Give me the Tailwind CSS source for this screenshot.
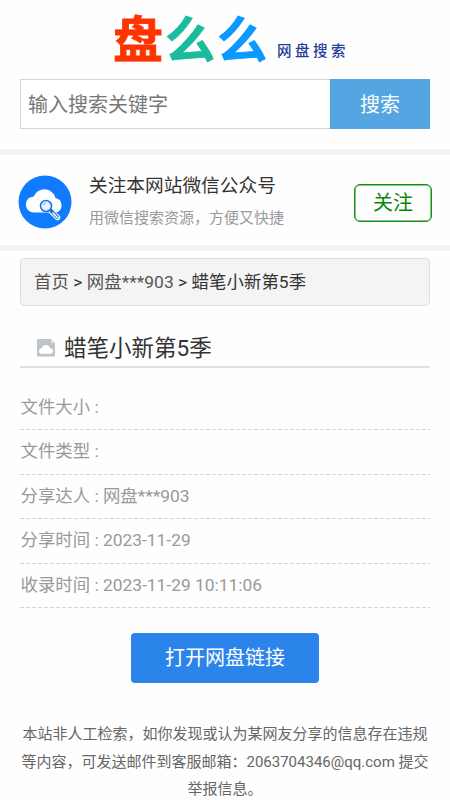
<!DOCTYPE html>
<html lang="zh-CN">
<head>
<meta charset="utf-8">
<title>盘么么</title>
<script src="https://cdn.jsdelivr.net/npm/@tailwindcss/browser@4"></script>
</head>
<body class="w-[450px] h-[800px] overflow-hidden bg-[#fefefe] font-[Roboto,'Noto_Sans_CJK_SC',sans-serif] text-[#444]">
<header class="h-[79px] pl-[113px] pt-[11px] flex whitespace-nowrap">
  <div class="flex text-[50px] leading-[60px] font-bold">
    <span class="w-[52px] text-[#ff3300] [-webkit-text-stroke:0.800px_#ff3300]">盘</span><span class="w-[52px] text-[#1abc9c] [-webkit-text-stroke:0.800px_#1abc9c]">么</span><span class="w-[58px] text-[#0c99ff] [-webkit-text-stroke:0.800px_#0c99ff]">么</span>
  </div>
  <div class="pt-[29px] pl-[2px] text-[14.500px] leading-[24px] font-medium tracking-[3.500px] text-[#1f4097]">网盘搜索</div>
</header>
<form class="mx-5 h-[50px] flex">
  <div class="w-[310px] border border-r-0 border-[#d5d5d5] bg-white pl-[7px] text-[20px] leading-[50px] text-[#777]">输入搜索关键字</div>
  <div class="w-[100px] bg-[#54a5e2] text-white text-center text-[20px] leading-[52px]">搜索</div>
</form>
<section class="mt-5 h-[102px] border-y-[6px] border-[#f4f4f4] flex items-center pl-[18px] pr-[18px]">
  <svg class="w-[54px] h-[54px] shrink-0 mt-[4px]" viewBox="0 0 54 54">
    <circle cx="27" cy="27" r="26.500" fill="#117bff"/>
    <path d="M16 37.500a8 8 0 0 1-.3-16.100 11.500 11.500 0 0 1 21.800 1.500 7.500 7.500 0 0 1 .5 14.600z" fill="#fff"/>
    <path d="M33 36l6.500 6.500" stroke="#fff" stroke-width="5.400" stroke-linecap="round"/>
    <path d="M32 34.500l7 7.500" stroke="#1675d5" stroke-width="3.400" stroke-linecap="round"/>
    <path d="M35 38l4 4.200" stroke="#fff" stroke-width="1.600" stroke-linecap="round"/>
    <circle cx="28" cy="31" r="5.500" fill="#e4f3ff" stroke="#1675d5" stroke-width="1.500"/>
    <path d="M25.500 30a3 3 0 0 1 2.500-2" fill="none" stroke="#67aef4" stroke-width="1"/>
  </svg>
  <div class="ml-[17px] mt-[2px] flex-1 whitespace-nowrap">
    <div class="text-[18.700px] leading-[30px] text-[#333]">关注本网站微信公众号</div>
    <div class="mt-[3px] text-[15px] leading-[28px] text-[#999]">用微信搜索资源，方便又快捷</div>
  </div>
  <div class="w-[78px] h-[38px] mt-[5px] rounded-[6px] border border-[#149014] shadow-[inset_0_0_0_0.500px_#149014] text-center text-[20px] leading-[36px] text-[#0b860b]">关注</div>
</section>
<main class="px-5">
  <nav class="mt-[7px] h-[48px] rounded-[4px] border border-[#dedede] bg-[#f4f4f4] pl-[13px] text-[17.400px] leading-[46px] whitespace-nowrap text-[#555]"><span class="tracking-[0.050px]">首页 <span class="text-[#333]">&gt;</span> 网盘***903 <span class="text-[#333]">&gt; 蜡笔小新第5季</span></span></nav>
  <h1 class="mt-[24px] h-[38px] border-b-2 border-[#e0e0e0] flex items-center pl-4 text-[22.500px] leading-[36px] text-[#333]">
    <svg class="w-[20px] h-[18px] mr-2 shrink-0" viewBox="0 0 20 18">
      <path d="M1 0h14l4 4v13.500H1z" fill="#bdc3c9"/><path d="M15 0v4h4z" fill="#e1e4e7"/>
      <path d="M6 14.800a2.800 2.800 0 0 1-.3-5.600 4.400 4.400 0 0 1 8.400 0 2.800 2.800 0 0 1 0 5.600z" fill="#fff"/>
    </svg>
    <span>蜡笔小新第5季</span>
  </h1>
  <div class="mt-[18px] text-[17.400px] leading-[43.400px] text-[#999] [&>div]:h-[44.400px] [&_p]:pl-[0.500px]">
    <div><p>文件大小 :</p><svg class="block w-full h-px"><path d="M0 .5H410" stroke="#d6d6d6" stroke-dasharray="4 2"/></svg></div>
    <div><p>文件类型 :</p><svg class="block w-full h-px"><path d="M0 .5H410" stroke="#d6d6d6" stroke-dasharray="4 2"/></svg></div>
    <div><p>分享达人 : 网盘***903</p><svg class="block w-full h-px"><path d="M0 .5H410" stroke="#d6d6d6" stroke-dasharray="4 2"/></svg></div>
    <div><p>分享时间 : 2023-11-29</p><svg class="block w-full h-px"><path d="M0 .5H410" stroke="#d6d6d6" stroke-dasharray="4 2"/></svg></div>
    <div><p>收录时间 : 2023-11-29 10:11:06</p><svg class="block w-full h-px"><path d="M0 .5H410" stroke="#d6d6d6" stroke-dasharray="4 2"/></svg></div>
  </div>
  <div class="mt-[25px] mx-auto w-[188px] h-[50px] rounded-[4px] bg-[#2b84e9] text-center text-[20px] leading-[50px] text-white">打开网盘链接</div>
</main>
<footer class="mt-[38.500px] text-center text-[15px] leading-[27.500px] whitespace-nowrap text-[#666]">本站非人工检索，如你发现或认为某网友分享的信息存在违规<br>等内容，可发送邮件到客服邮箱：2063704346@qq.com 提交<br>举报信息。</footer>
</body>
</html>
